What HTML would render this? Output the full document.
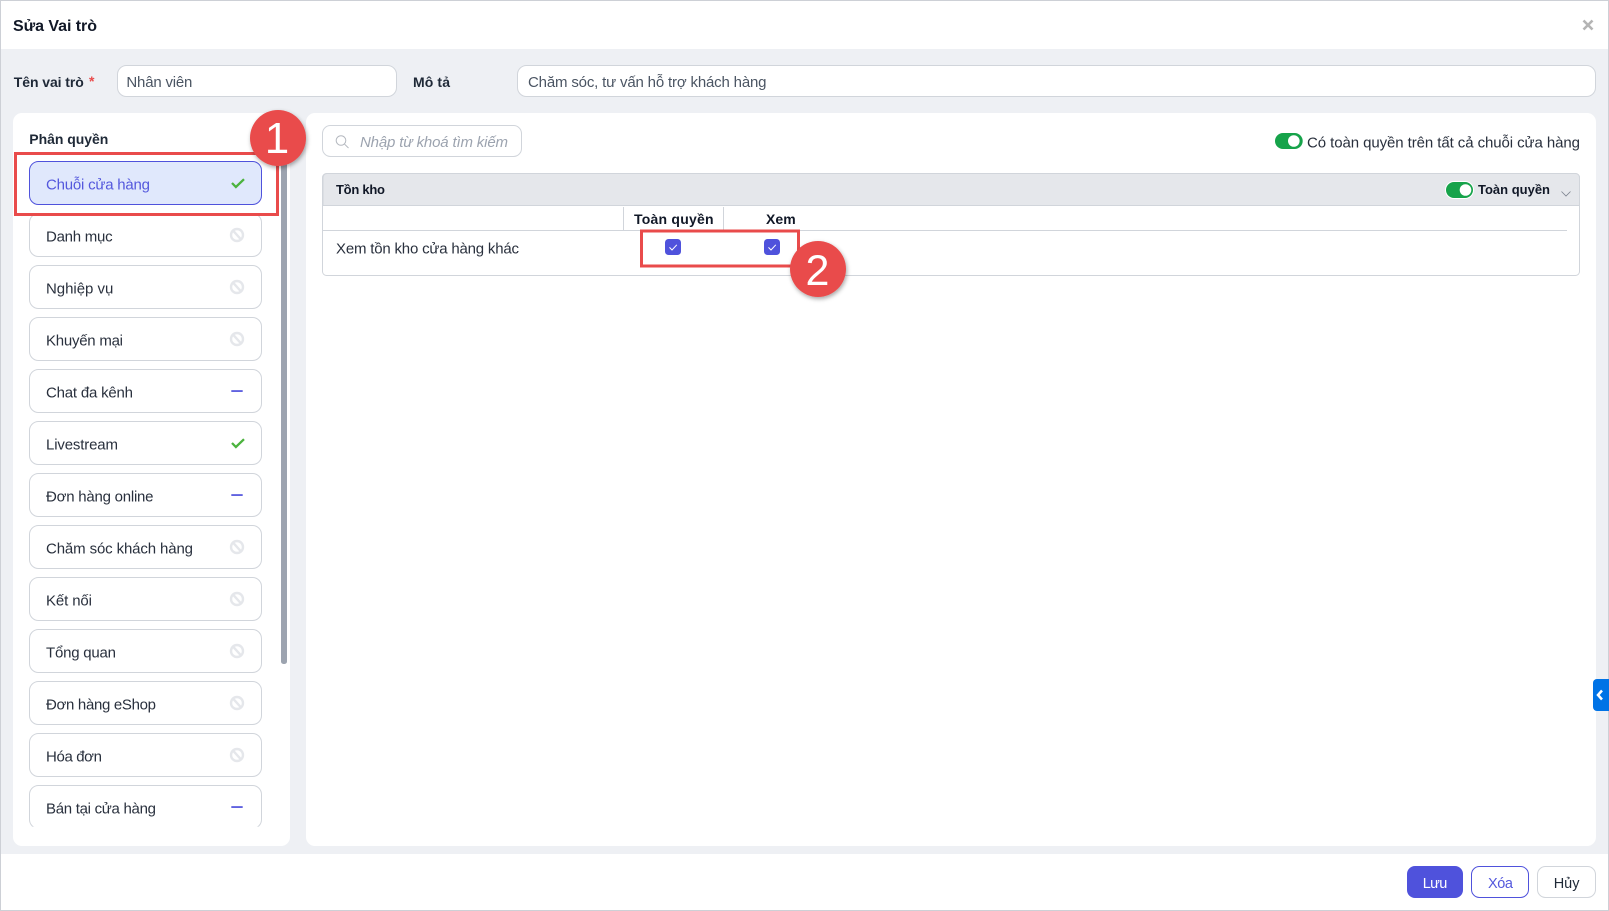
<!DOCTYPE html>
<html lang="vi">
<head>
<meta charset="utf-8">
<title>Sửa Vai trò</title>
<style>
html,body{margin:0;padding:0;width:1609px;height:911px;overflow:hidden;background:#fff}
svg{display:block;filter:blur(.3px)}
text{font-family:"Liberation Sans",Arial,sans-serif;fill:#1f2937;font-size:15px}
.b{font-weight:700}
.it{font-size:15px;fill:#29303d}
</style>
</head>
<body>
<svg xmlns="http://www.w3.org/2000/svg" width="1609" height="911" viewBox="0 0 1609 911">
<defs>
<filter id="sh" x="-30%" y="-30%" width="160%" height="160%"><feDropShadow dx="1" dy="2" stdDeviation="2" flood-color="#000" flood-opacity=".35"/></filter>
<clipPath id="lc"><rect x="13" y="150" width="270" height="676.7"/></clipPath>
<g id="ban" fill="none" stroke="#e5e7eb" stroke-width="2.4"><circle cx="237" cy="0" r="6"/><path d="M232.3-5.2 241.7 5.2"/></g>
<path id="chk" d="M0 5 3.9 9 12 1.2" fill="none" stroke="#4cb33e" stroke-width="2.3"/>
<rect id="dash" x="231.3" y="-.8" width="11.4" height="1.7" fill="#4f52dc"/>
</defs>

<rect x=".5" y=".5" width="1608" height="910" fill="#fff" stroke="#cdd0d6"/>
<rect x="1" y="49" width="1607" height="805" fill="#eef0f4"/>

<text x="13" y="31" class="b" style="font-size:16px;fill:#111827" textLength="84">Sửa Vai trò</text>
<path d="M1583.5 20.5 1592.5 29.5M1592.5 20.5 1583.5 29.5" stroke="#b4b4b4" stroke-width="2.6"/>

<text x="13.8" y="87" class="b" style="font-size:14px" textLength="70">Tên vai trò</text>
<text x="89" y="86" class="b" style="font-size:14px;fill:#e94b4b">*</text>
<rect x="117.5" y="65.5" width="279" height="31" rx="9" fill="#fff" stroke="#d1d5db"/>
<text x="126.4" y="87" style="font-size:15px;fill:#4b5563" textLength="66">Nhân viên</text>
<text x="413" y="87" class="b" style="font-size:14px" textLength="37">Mô tả</text>
<rect x="517.5" y="65.5" width="1078" height="31" rx="9" fill="#fff" stroke="#d1d5db"/>
<text x="528" y="87" style="font-size:15px;fill:#4b5563" textLength="238.5">Chăm sóc, tư vấn hỗ trợ khách hàng</text>

<!-- left panel -->
<rect x="13" y="113" width="277" height="733" rx="9" fill="#fff"/>
<text x="29.3" y="144" class="b" style="font-size:14px" textLength="79">Phân quyền</text>
<rect x="281" y="150" width="6" height="514" rx="2.5" fill="#9ca3af"/>

<g clip-path="url(#lc)">
<rect x="29.5" y="161.5" width="232" height="43" rx="9" fill="#e0e8fc" stroke="#4f52dc"/>
<text x="46" y="189.5" style="font-size:15px;fill:#5458dd" textLength="104">Chuỗi cửa hàng</text>
<use href="#chk" x="232" y="178"/>

<rect x="29.5" y="213.5" width="232" height="43" rx="9" fill="#fff" stroke="#d1d5db"/>
<text x="46" y="241.5" class="it" textLength="66.6">Danh mục</text>
<use href="#ban" y="235"/>

<rect x="29.5" y="265.5" width="232" height="43" rx="9" fill="#fff" stroke="#d1d5db"/>
<text x="46" y="293.5" class="it" textLength="67.3">Nghiệp vụ</text>
<use href="#ban" y="287"/>

<rect x="29.5" y="317.5" width="232" height="43" rx="9" fill="#fff" stroke="#d1d5db"/>
<text x="46" y="345.5" class="it" textLength="77">Khuyến mại</text>
<use href="#ban" y="339"/>

<rect x="29.5" y="369.5" width="232" height="43" rx="9" fill="#fff" stroke="#d1d5db"/>
<text x="46" y="397.5" class="it" textLength="87">Chat đa kênh</text>
<use href="#dash" y="391"/>

<rect x="29.5" y="421.5" width="232" height="43" rx="9" fill="#fff" stroke="#d1d5db"/>
<text x="46" y="449.5" class="it" textLength="72">Livestream</text>
<use href="#chk" x="232" y="438"/>

<rect x="29.5" y="473.5" width="232" height="43" rx="9" fill="#fff" stroke="#d1d5db"/>
<text x="46" y="501.5" class="it" textLength="107.5">Đơn hàng online</text>
<use href="#dash" y="495"/>

<rect x="29.5" y="525.5" width="232" height="43" rx="9" fill="#fff" stroke="#d1d5db"/>
<text x="46" y="553.5" class="it" textLength="147">Chăm sóc khách hàng</text>
<use href="#ban" y="547"/>

<rect x="29.5" y="577.5" width="232" height="43" rx="9" fill="#fff" stroke="#d1d5db"/>
<text x="46" y="605.5" class="it" textLength="46">Kết nối</text>
<use href="#ban" y="599"/>

<rect x="29.5" y="629.5" width="232" height="43" rx="9" fill="#fff" stroke="#d1d5db"/>
<text x="46" y="657.5" class="it" textLength="70">Tổng quan</text>
<use href="#ban" y="651"/>

<rect x="29.5" y="681.5" width="232" height="43" rx="9" fill="#fff" stroke="#d1d5db"/>
<text x="46" y="709.5" class="it" textLength="110">Đơn hàng eShop</text>
<use href="#ban" y="703"/>

<rect x="29.5" y="733.5" width="232" height="43" rx="9" fill="#fff" stroke="#d1d5db"/>
<text x="46" y="761.5" class="it" textLength="56">Hóa đơn</text>
<use href="#ban" y="755"/>

<rect x="29.5" y="785.5" width="232" height="43" rx="9" fill="#fff" stroke="#d1d5db"/>
<text x="46" y="813.5" class="it" textLength="110">Bán tại cửa hàng</text>
<use href="#dash" y="807"/>
</g>

<!-- right panel -->
<rect x="306" y="113" width="1290" height="733" rx="9" fill="#fff"/>
<rect x="322.5" y="125.5" width="199" height="31" rx="8" fill="#fff" stroke="#d1d5db"/>
<g fill="none" stroke="#b4b8bf" stroke-width="1"><circle cx="341" cy="140.5" r="4.8"/><path d="M344.6 144.2 348.5 148"/></g>
<text x="360" y="147" style="font-size:15px;font-style:italic;fill:#9ca3af" textLength="148">Nhập từ khoá tìm kiếm</text>

<rect x="1275" y="133" width="27.7" height="16" rx="8" fill="#16a34a"/>
<circle cx="1293.8" cy="141" r="5.8" fill="#fff"/>
<text x="1307" y="147.5" style="font-size:15px;fill:#29303d" textLength="273">Có toàn quyền trên tất cả chuỗi cửa hàng</text>

<!-- table -->
<rect x="322.5" y="173.5" width="1257" height="102" rx="4" fill="#fff" stroke="#d1d5db"/>
<path d="M323 205.5V177.5a4 4 0 0 1 4-4H1575.5a4 4 0 0 1 4 4V205.5Z" fill="#e5e7eb" stroke="#d1d5db"/>
<path d="M323 205.5H1579" stroke="#d1d5db" fill="none"/>
<path d="M323 230.5H1567M623.5 207V230M723.5 207V230" stroke="#d1d5db" fill="none"/>
<text x="336" y="194" class="b" style="font-size:13px;fill:#111827" textLength="49">Tồn kho</text>

<rect x="1445" y="181" width="29" height="18" rx="9" fill="#fff"/>
<rect x="1446" y="182" width="27" height="16" rx="8" fill="#16a34a"/>
<circle cx="1465.5" cy="190" r="5.8" fill="#fff"/>
<text x="1478" y="194" class="b" style="font-size:13px;fill:#111827" textLength="72">Toàn quyền</text>
<path d="M1561.5 191.5 1566 196 1570.5 191.5" fill="none" stroke="#7b828e" stroke-width=".8"/>

<text x="634" y="224" class="b" style="font-size:14px;fill:#111827" textLength="79.6">Toàn quyền</text>
<text x="766" y="224" class="b" style="font-size:14px;fill:#111827" textLength="29.7">Xem</text>
<text x="336" y="253.5" style="font-size:15px;fill:#29303d" textLength="183">Xem tồn kho cửa hàng khác</text>

<rect x="665" y="239" width="16" height="16" rx="3.5" fill="#4f52dc"/>
<path d="M669.5 247.4 672 250 676.8 244.8" fill="none" stroke="#fff" stroke-width="1"/>
<rect x="764" y="239" width="16" height="16" rx="3.5" fill="#4f52dc"/>
<path d="M768.5 247.4 771 250 775.8 244.8" fill="none" stroke="#fff" stroke-width="1"/>

<!-- annotations -->
<rect x="15.5" y="153.5" width="262" height="61" fill="none" stroke="#e94b4b" stroke-width="3"/>
<circle cx="278" cy="138" r="28" fill="#e94b4b" filter="url(#sh)"/>
<text x="277" y="153" text-anchor="middle" style="font-size:44px;fill:#fff">1</text>

<rect x="641.5" y="231" width="157" height="35" fill="none" stroke="#e94b4b" stroke-width="3"/>
<circle cx="818" cy="269" r="28" fill="#e94b4b" filter="url(#sh)"/>
<text x="817.5" y="285" text-anchor="middle" style="font-size:43px;fill:#fff">2</text>

<!-- side tab -->
<path d="M1609 679H1597a4 4 0 0 0-4 4V707a4 4 0 0 0 4 4H1609Z" fill="#0073e6"/>
<path d="M1602 690.5 1598 695 1602 699.5" fill="none" stroke="#fff" stroke-width="2.5"/>

<!-- footer -->
<rect x="1407" y="866" width="56" height="32" rx="8" fill="#4f52dc"/>
<text x="1422.7" y="888" style="font-size:14.5px;fill:#fff" textLength="24.6">Lưu</text>
<rect x="1471.5" y="866.5" width="57" height="31" rx="8" fill="#fff" stroke="#4f52dc"/>
<text x="1488" y="888" style="font-size:14.5px;fill:#5458dd" textLength="25">Xóa</text>
<rect x="1537.5" y="866.5" width="58" height="31" rx="8" fill="#fff" stroke="#d1d5db"/>
<text x="1553.7" y="888" style="font-size:14.5px;fill:#1f2937" textLength="25.8">Hủy</text>
</svg>
</body>
</html>
